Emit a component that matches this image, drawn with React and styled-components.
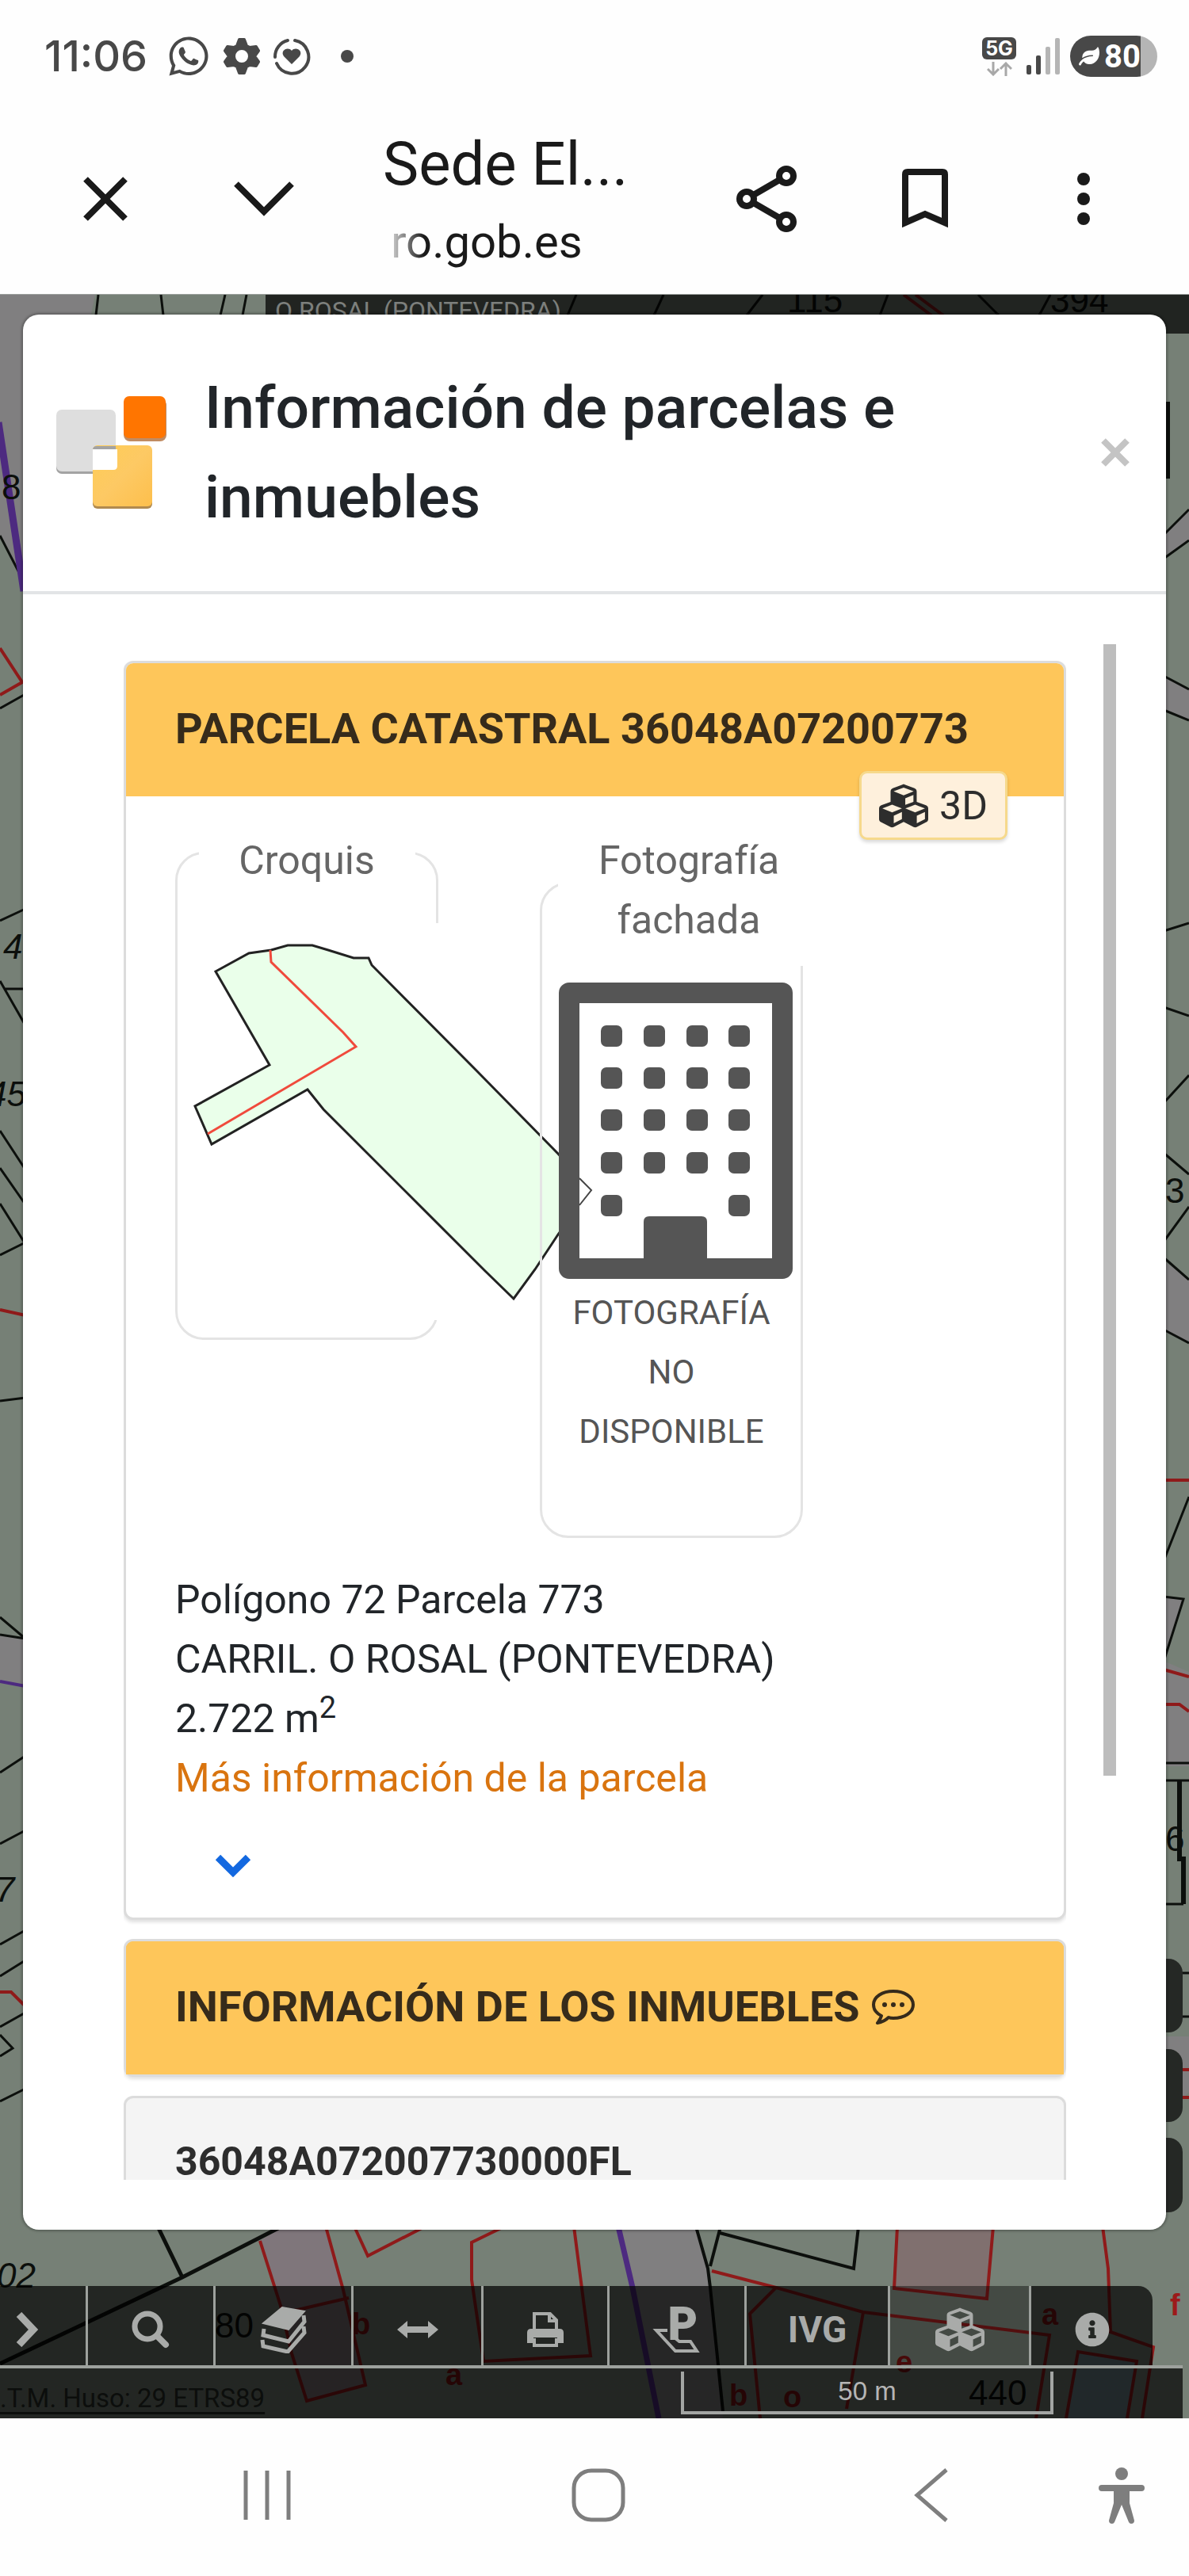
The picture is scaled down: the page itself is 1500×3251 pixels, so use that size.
import React, { useState } from 'react'
import styled, { createGlobalStyle } from 'styled-components'
import { FaWhatsapp, FaCubes, FaLeaf, FaInfoCircle } from 'react-icons/fa'


const GlobalStyle = createGlobalStyle`
  * {
    box-sizing: border-box;
  }
  body {
    margin: 0;
    background: #fefefe;
    font-family: Roboto, "Liberation Sans", sans-serif;
    color: #212529;
  }
  button {
    border: 0;
    padding: 0;
    background: none;
    color: inherit;
    font: inherit;
    cursor: pointer;
  }
  svg {
    display: block;
    flex: none;
  }
`

/* ---------- phone status bar ---------- */

const StatusBar = styled.header`
  display: flex;
  justify-content: space-between;
  align-items: center;
  height: 130px;
  padding: 12px 40px 0 56px;
  color: #484848;
`

const StatusGroup = styled.div`
  display: flex;
  align-items: center;
  gap: ${props => props.$gap}px;
`

const Clock = styled.time`
  font-family: Inter, Roboto, sans-serif;
  font-size: 54px;
  font-weight: 500;
  line-height: 60px;
  margin-right: 8px;
`

const Dot = styled.span`
  width: 16px;
  height: 16px;
  margin-left: 22px;
  border-radius: 50%;
  background: #484848;
`

const Network = styled.div`
  display: flex;
  flex-direction: column;
  align-items: center;
  gap: 3px;
`

const NetworkLabel = styled.span`
  width: 43px;
  border-radius: 6px;
  background: #484848;
  color: #fff;
  font-family: Inter, Roboto, sans-serif;
  font-size: 25px;
  font-weight: 700;
  line-height: 28px;
  text-align: center;
`

const Battery = styled.div`
  display: flex;
  align-items: center;
  justify-content: center;
  gap: 6px;
  width: 110px;
  height: 52px;
  padding-right: 10px;
  border-radius: 26px;
  background: linear-gradient(to right, #484848 81%, #b5b5b5 81%);
  color: #fff;
  font-size: 40px;
  font-weight: 700;
`

const GearIcon = () => (
  <svg width="46" height="48" viewBox="0 0 46 48">
    <path
      fill="#484848"
      stroke="#484848"
      strokeWidth="4"
      strokeLinejoin="round"
      fillRule="evenodd"
      d="M20 3h6l3 8 4 2 8-1 3 5-5 7 5 7-3 5-8-1-4 2-3 8h-6l-3-8-4-2-8 1-3-5 5-7-5-7 3-5 8 1 4-2zM23 14a10 10 0 1 0 0 20 10 10 0 0 0 0-20z"
    />
  </svg>
)

const HeartRingIcon = () => (
  <svg width="48" height="48" viewBox="0 0 48 48">
    <g fill="none" stroke="#484848" strokeWidth="4" strokeLinecap="round">
      <path d="M28 4a21 21 0 1 1-23 29" />
      <path d="M3 25a21 21 0 0 1 16-21" />
    </g>
    <path fill="#484848" d="M24 34L14 24c-5-7 5-13 10-7 5-6 15 0 10 7z" />
  </svg>
)

const DataArrows = () => (
  <svg width="32" height="18" viewBox="0 0 32 18" fill="none" stroke="#a8a8a8" strokeWidth="3">
    <path d="M8 0v16M1 9l7 7 7-7M24 18V2M17 9l7-7 7 7" />
  </svg>
)

const SignalIcon = () => (
  <svg width="42" height="46" viewBox="0 0 42 46">
    <g fill="#484848">
      <rect x="0" y="34" width="6" height="12" rx="2" />
      <rect x="12" y="22" width="6" height="24" rx="2" />
    </g>
    <g fill="#b5b5b5">
      <rect x="24" y="11" width="6" height="35" rx="2" />
      <rect x="36" y="0" width="6" height="46" rx="2" />
    </g>
  </svg>
)

/* ---------- browser bar ---------- */

const BrowserBar = styled.nav`
  display: flex;
  align-items: center;
  height: 241px;
  padding: 0 33px;
  color: #1a1a1a;
`

const BarButton = styled.button`
  display: flex;
  justify-content: center;
  width: 200px;
`

const PageTitle = styled.div`
  display: flex;
  flex-direction: column;
  flex: 1;
  gap: 16px;
  padding-left: 50px;
  min-width: 0;
`

const SiteName = styled.span`
  font-size: 76px;
  line-height: 92px;
  white-space: nowrap;
`

const SiteUrl = styled.span`
  padding-left: 10px;
  font-size: 58px;
  line-height: 72px;
  mask-image: linear-gradient(to right, transparent, #000 52px);
`

const BarIcon = ({ width, height, stroke = 8, children }) => (
  <svg width={width} height={height} viewBox={`0 0 ${width} ${height}`} fill="none" stroke="#1a1a1a" strokeWidth={stroke}>
    {children}
  </svg>
)

/* ---------- map ---------- */

const MapArea = styled.main`
  position: relative;
  overflow: hidden;
  padding-top: 25px;
  border-top: 1px solid #9a9f9c;
  background: #768076;
`

const MapDrawing = styled.svg`
  position: absolute;
  inset: 0;
  width: 100%;
  height: 100%;
`

const LocationBar = styled.div`
  position: absolute;
  top: 0;
  left: 335px;
  right: 0;
  height: 49px;
  padding-left: 12px;
  background: rgba(0, 0, 0, .72);
  color: #7c7f7c;
  font-size: 32px;
  line-height: 40px;
`

const ink = { fill: 'none', stroke: '#0c0f0c', strokeWidth: 3 }
const red = { fill: 'none', stroke: '#8f1a1a', strokeWidth: 4 }
const violet = { fill: 'none', stroke: '#4d2a80', strokeWidth: 7 }

const CadastralMap = () => (
  <MapDrawing viewBox="0 372 1500 2680" preserveAspectRatio="xMidYMid slice" aria-hidden="true">
    <g fill="#807f80">
      <path d="M0 372H120L40 760 0 676z" />
      <path d="M0 2063L60 2072V2132L0 2122z" />
      <path d="M1465 675L1500 643V682L1465 704zM1465 853L1500 870V909L1465 896zM1465 1589L1500 1615V1695L1465 1679z" />
      <path d="M1465 2015L1493 2018 1470 2097 1500 2110V2229H1465zM1465 2570H1500V2640L1465 2680z" />
      <path d="M781 2805H876L893 2863 896 2887 912 3052H831L798 2887z" />
    </g>
    <path fill="#7f767b" d="M356 2810H411L433 2890 461 3010 387 3030 354 2910 328 2828z" />
    <path fill="#80706f" d="M1132 2810L1128 2888 1245 2901 1253 2810z" />
    <path fill="#6f868c" d="M1345 3052L1360 2968 1434 2980 1422 3052z" />

    <g {...ink}>
      <path d="M124 372L121 398M203 372L206 398M284 372L278 398M311 372L306 398" />
      <path d="M727 372L716 398M837 372L825 398M962 372L942 398M1120 372L1110 398M1234 372L1260 398M1325 372L1311 398" />
      <path d="M0 676L32 738M0 894L32 876M0 1162L32 1147M0 1238L32 1294M5 1248H32" />
      <path d="M0 1427L32 1476M0 1474L32 1520M0 1519L32 1570M0 1584L32 1568M0 1768L32 1764" />
      <path d="M0 2041L32 2068M0 2063L32 2068M0 2237L32 2216M0 2327L32 2310M0 2454L32 2436M0 2494L32 2474" />
      <path d="M0 2558L32 2540M0 2568L16 2585 0 2595M0 2652L32 2636" />
      <path d="M1468 675L1500 643M1468 705L1500 682M1468 853L1500 870M1468 896L1500 909M1468 1175L1500 1165M1468 1271L1500 1282" />
      <path d="M1468 1392L1500 1357M1468 1455L1500 1482M1468 1567L1500 1523M1468 1587L1500 1615M1468 1678L1500 1695" />
      <path d="M1468 1970L1500 1889M1468 2015L1493 2018 1468 2097M1468 2225H1500M1468 2247H1500" />
      <path strokeWidth="6" d="M1488 2247V2346H1493V2403" />
      <path d="M1468 2403H1493M1468 2490H1500M1468 2545H1500" />
      <path strokeWidth="5" d="M199 2810L230 2874M355 2810L230 2874 0 2983" />
      <path strokeWidth="4" d="M878 2810L893 2863 896 2887 912 3043M909 2810L896 2860M908 2818L1077 2863 1083 2810" />
    </g>
    <path fill="#0c0f0c" d="M1470 507h6v97h-6z" />

    <g {...red}>
      <path d="M1140 372L1175 398M1155 372L1190 398" />
      <path d="M0 818L28 861 0 877M0 1653L32 1660M0 2514H14L32 2532" />
      <path d="M1468 1868H1500M1468 2107L1500 2116M1468 2151H1488L1500 2160M1468 2612H1500M1468 2647H1500" />
      <path d="M328 2828L354 2910 368 2970 387 3030 461 3010 433 2890 411 2810M354 2920L440 2900" />
      <path d="M447 2810L464 2847 536 2810M636 2810L595 2830V2877L610 2980 745 2973 724 2810" />
      <path d="M898 2866L979 2887 1089 2918 1324 2947 1307 3052M979 2887L946 2920 959 3052M1089 2918L1068 3040" />
      <path d="M1132 2810L1128 2888 1245 2901 1253 2810" />
      <path d="M1391 2810L1398 2863 1401 2943 1455 2962 1441 3052M1345 3052L1360 2968 1434 2980 1422 3052" />
    </g>

    <path {...violet} strokeWidth="9" d="M-2 533L30 746" />
    <path {...violet} strokeWidth="4" d="M0 2122L32 2128" />
    <path {...violet} d="M780 2810L798 2887 831 3052" />

    <g fill="#0c0f0c" fontFamily="Liberation Sans, sans-serif" fontSize="44">
      <text x="2" y="630">8</text>
      <text x="4" y="1210" fontStyle="italic">4</text>
      <text x="-16" y="1396" fontStyle="italic">45</text>
      <text x="-6" y="2400" fontStyle="italic">7</text>
      <text x="1470" y="1518">3</text>
      <text x="1470" y="2336">6</text>
      <text x="-4" y="2887" fontStyle="italic">02</text>
      <text x="271" y="2950">80</text>
      <text x="993" y="394">115</text>
      <text x="1325" y="394">394</text>
      <text x="1222" y="3035">440</text>
    </g>
    <g fill="#7c1212" fontFamily="Liberation Sans, sans-serif" fontSize="38" fontWeight="bold">
      <text x="444" y="2946">b</text>
      <text x="562" y="3010">a</text>
      <text x="920" y="3036">b</text>
      <text x="988" y="3038">o</text>
      <text x="1130" y="2994">e</text>
      <text x="1314" y="2934">a</text>
      <text x="1476" y="2922" fill="#9c1a1a">f</text>
    </g>
    <g fill="#252825">
      <rect x="1440" y="2472" width="52" height="93" rx="18" />
      <rect x="1440" y="2586" width="52" height="92" rx="18" />
      <rect x="1440" y="2698" width="52" height="94" rx="18" />
    </g>
  </MapDrawing>
)

/* ---------- modal ---------- */

const Modal = styled.section`
  position: relative;
  margin: 0 29px;
  border-radius: 20px;
  background: #fff;
  box-shadow: 0 0 3px 2px rgba(0, 0, 0, .25);
`

const ModalHeader = styled.header`
  display: flex;
  align-items: center;
  gap: 48px;
  padding: 61px 45px 62px 41px;
  border-bottom: 4px solid #e2e4e6;
`

const ModalTitle = styled.h1`
  flex: 1;
  margin: 0;
  font-size: 75px;
  font-weight: 500;
  line-height: 113px;
`

const ModalBody = styled.div`
  display: flex;
  gap: 47px;
  padding: 63px 63px 63px 127px;
`

const CardList = styled.div`
  display: flex;
  flex: 1;
  flex-direction: column;
  gap: 24px;
  max-height: 1938px;
  padding-top: 21px;
  overflow: hidden;
`

const ScrollTrack = styled.div`
  width: 16px;
`

const ScrollThumb = styled.div`
  background: #bdbdbd;
`

const Card = styled.article`
  position: relative;
  flex: none;
  border: 3px solid #dcdcdc;
  border-radius: 12px;
  background: ${props => props.$background || '#fff'};
  box-shadow: 0 3px 4px rgba(0, 0, 0, .12);
`

const CardHeader = styled.h2`
  display: flex;
  align-items: center;
  gap: 14px;
  margin: 0;
  padding: 45px 62px 48px;
  border-radius: 9px 9px 0 0;
  background: #fec65a;
  color: #362b1b;
  font-size: 54px;
  font-weight: 700;
  line-height: 75px;
`

const PropertyHeader = styled(CardHeader)`
  padding-top: 43px;
  background: none;
  color: #2d2d2d;
  font-size: 50px;
`

const CardContent = styled.div`
  padding: 24px 62px 28px;
  font-size: 50px;
  line-height: 75px;
`

const View3dButton = styled.button`
  position: absolute;
  top: 136px;
  right: 71px;
  display: flex;
  align-items: center;
  gap: 14px;
  height: 87px;
  padding: 0 22px;
  border: 3px solid #f6d98c;
  border-radius: 10px;
  background: #fef0dc;
  box-shadow: 0 3px 4px rgba(0, 0, 0, .15);
  color: #2d2d2d;
  font-size: 50px;
`

const Pictures = styled.div`
  display: flex;
  align-items: flex-start;
  gap: 128px;
  margin-bottom: 41px;
`

const Frame = styled.fieldset`
  width: 332px;
  min-width: 0;
  margin: 0;
  padding: 0 0 ${props => props.$bottom}px;
  border: 3px solid #e4e4e4;
  border-radius: 36px;
`

const FrameLabel = styled.legend`
  width: ${props => props.$width}px;
  margin-left: ${props => props.$indent}px;
  padding: 20px 30px 0;
  background: #fff;
  box-shadow: 0 20px 0 #fff;
  color: #666;
  text-align: center;
`

const ParcelSketch = styled.svg`
  margin: 41px 0 0 20px;
  background: #fff;
`

const NoPhoto = styled.figure`
  position: relative;
  margin: 41px 0 0;
  color: #555;
  text-align: center;
  svg {
    margin-left: 21px;
  }
`

const NoPhotoText = styled.figcaption`
  padding: 5px 36px 0;
  font-size: 42px;
`

const Details = styled.address`
  font-style: normal;
  sup {
    font-size: 38px;
    line-height: 0;
  }
`

const MoreLink = styled.a`
  color: #d9740f;
  text-decoration: none;
`

const ExpandButton = styled.button`
  display: flex;
  align-items: center;
  height: 75px;
  margin-top: 35px;
  padding: 0 50px;
`

const CatastroLogo = () => (
  <svg width="140" height="146" viewBox="0 0 140 146">
    <defs>
      <linearGradient id="gold" x1="0" y1="0" x2="1" y2="1">
        <stop offset="0" stopColor="#ffcd55" />
        <stop offset=".5" stopColor="#fdc964" />
        <stop offset="1" stopColor="#fdbf4c" />
      </linearGradient>
    </defs>
    <rect x="1" y="22" width="75" height="78" rx="7" fill="#a3a3a3" />
    <rect x="1" y="19" width="75" height="78" rx="7" fill="#dedede" />
    <rect x="86" y="5" width="54" height="54" rx="8" fill="#c08b62" />
    <rect x="86" y="2" width="53" height="53" rx="7" fill="#ff7500" />
    <rect x="47" y="68" width="75" height="76" rx="6" fill="#b18a4f" />
    <rect x="47" y="64" width="75" height="77" rx="6" fill="url(#gold)" />
    <path d="M47 70q0-5 5-5h24v4H47z" fill="#a3a3a3" />
    <path d="M47 69h31v21q0 5-5 5H47z" fill="#fff" />
  </svg>
)

const parcelOutline = '28,61 70,38 98,34 119,28 150,28 170,34 202,44 221,44 225,53 357,186 460,291 500,336 460,393 431,437 404,474 368,439 164,235 144,210 23,279 2,231 96,179'

const Sketch = () => (
  <ParcelSketch width="501" height="501" viewBox="0 0 501 501" role="img" aria-label="Croquis de la parcela">
    <polygon points={parcelOutline} fill="#eaffea" stroke="#222" strokeWidth="3" />
    <polyline points="97,34 98,49 189,138 205,156 18,266" fill="none" stroke="#f04a3c" strokeWidth="3" />
  </ParcelSketch>
)

const BuildingIcon = () => {
  const columns = [53, 107, 161, 214]
  const rows = [54, 107, 160, 214, 268]
  return (
    <svg width="295" height="374" viewBox="0 0 295 374">
      <rect x="13" y="13" width="269" height="348" fill="#fff" stroke="#555" strokeWidth="26" strokeLinejoin="round" />
      <path d="M26 247l15 15-15 19" fill="none" stroke="#444" strokeWidth="2" />
      {rows.map((y, row) => columns.map((x, col) => (
        row === 4 && (col === 1 || col === 2)
          ? null
          : <rect key={`${x}-${y}`} x={x} y={y} width="27" height="27" rx="7" fill="#555" />
      )))}
      <path d="M107 361V302q0-7 7-7h66q7 0 7 7v59z" fill="#555" />
    </svg>
  )
}

const CommentIcon = () => (
  <svg width="56" height="46" viewBox="0 0 56 46">
    <path
      fill="none"
      stroke="#362b1b"
      strokeWidth="4"
      strokeLinejoin="round"
      d="M28 3C14 3 3 10 3 20c0 6 4 11 10 14-1 4-3 6-5 9 6-1 11-4 14-7 2 1 4 1 6 1 14 0 25-7 25-17S42 3 28 3z"
    />
    <g fill="#362b1b">
      <circle cx="17" cy="20" r="3" />
      <circle cx="28" cy="20" r="3" />
      <circle cx="39" cy="20" r="3" />
    </g>
  </svg>
)

/* ---------- map toolbar ---------- */

const Toolbar = styled.div`
  position: relative;
  display: grid;
  grid-template-columns: 111fr 161fr 174fr 164fr 159fr 173fr 181fr 178fr 153fr;
  height: 104px;
  margin-top: 71px;
  padding-right: 46px;
  &::after {
    content: '';
    position: absolute;
    left: 0;
    right: 8px;
    bottom: 0;
    height: 4px;
    background: #9da19d;
  }
`

const Tool = styled.button`
  display: flex;
  align-items: center;
  justify-content: center;
  min-width: 0;
  height: 100px;
  padding-top: 10px;
  border-right: 3px solid #9da19d;
  background: rgba(0, 0, 0, ${props => props.$light ? '.42' : '.7'});
  color: #a9aba9;
  font-size: 46px;
  &:first-child {
    padding-right: 40px;
  }
  &:last-child {
    border-right: 0;
    border-top-right-radius: 18px;
  }
`

const ToolLabel = styled.span`
  font-family: "Liberation Sans Narrow", Roboto, sans-serif;
  font-size: 46px;
  font-weight: 700;
`

const FootBar = styled.footer`
  position: relative;
  display: flex;
  justify-content: space-between;
  align-items: flex-start;
  height: 63px;
  margin-right: 8px;
  padding: 4px 163px 0 0;
  background: rgba(0, 0, 0, .7);
`

const Projection = styled.a`
  margin-top: 16px;
  color: #0c0e0c;
  font-size: 33px;
  line-height: 36px;
  text-decoration: underline;
  text-underline-offset: 6px;
`

const Scale = styled.div`
  width: 470px;
  height: 54px;
  border: solid #a3a5a3;
  border-width: 0 4px 4px;
  color: #b5b5b5;
  font-family: "Liberation Sans", sans-serif;
  font-size: 33px;
  line-height: 50px;
  text-align: center;
`

const ToolIcon = ({ width = 50, height = 46, children }) => (
  <svg width={width} height={height} viewBox={`0 0 ${width} ${height}`} fill="none" stroke="#a9aba9" strokeWidth="5">
    {children}
  </svg>
)

const tools = [
  {
    name: 'Desplegar',
    icon: <ToolIcon width={32} height={44}><path strokeWidth="9" d="M6 3l18 19L6 41" /></ToolIcon>
  },
  {
    name: 'Buscar',
    icon: <ToolIcon width={48} height={48}><circle cx="20" cy="20" r="16" strokeWidth="7" /><path strokeWidth="8" strokeLinecap="round" d="M32 32l11 11" /></ToolIcon>
  },
  {
    name: 'Capas',
    icon: (
      <ToolIcon width={60} height={60}>
        <path fill="#a9aba9" strokeWidth="2" d="M4 22L28 2l28 5-20 23z" />
        <path strokeWidth="5" d="M5 29l-1 8 32 8 20-25-1-8M3 43l1 8 31 7 21-24-1-8" />
      </ToolIcon>
    )
  },
  {
    name: 'Medir',
    icon: <ToolIcon width={52} height={24}><path fill="#a9aba9" stroke="none" d="M0 12L13 1v7h26V1l13 11-13 11v-7H13v7z" /></ToolIcon>
  },
  {
    name: 'Imprimir',
    icon: (
      <ToolIcon width={48} height={46}>
        <path strokeWidth="4" d="M10 24V3h20l8 8v13M29 3v9h9" />
        <path fill="#a9aba9" stroke="none" d="M1 40V27q0-5 5-5h36q5 0 5 5v13h-8V33H9v7z" />
        <path strokeWidth="4" d="M10 34v9h28v-9" />
      </ToolIcon>
    )
  },
  {
    name: 'Parcela',
    icon: (
      <svg width="62" height="62" viewBox="0 0 62 62">
        <path d="M19 32H5l24 26h27l-8-12H34L24 38" fill="none" stroke="#a9aba9" strokeWidth="4" />
        <text x="20" y="43" fill="#a9aba9" stroke="#a9aba9" strokeWidth="2" fontSize="56" fontWeight="700" fontFamily="Roboto, sans-serif">P</text>
      </svg>
    )
  },
  { name: 'IVG', icon: <ToolLabel>IVG</ToolLabel> },
  { name: 'Edificios 3D', light: true, icon: <FaCubes size={62} /> },
  { name: 'Ayuda', icon: <FaInfoCircle size={44} /> }
]

/* ---------- android navigation ---------- */

const SystemNav = styled.nav`
  display: grid;
  grid-template-columns: 418fr 418fr 422fr 58fr;
  align-items: center;
  height: 199px;
  padding: 0 56px 6px 128px;
`

const NavButton = styled.button`
  display: flex;
  justify-content: center;
`

const NavIcon = ({ width, height, children }) => (
  <svg width={width} height={height} viewBox={`0 0 ${width} ${height}`} fill="none" stroke="#7e7e7e" strokeWidth="5">
    {children}
  </svg>
)

const viewportHeight = 1938
const thumbHeight = 1428

const App = () => {
  const [expanded, setExpanded] = useState(false)

  return (
    <>
      <GlobalStyle />
      <StatusBar>
        <StatusGroup $gap={16}>
          <Clock>11:06</Clock>
          <FaWhatsapp size={56} />
          <GearIcon />
          <HeartRingIcon />
          <Dot />
        </StatusGroup>
        <StatusGroup $gap={13}>
          <Network>
            <NetworkLabel>5G</NetworkLabel>
            <DataArrows />
          </Network>
          <SignalIcon />
          <Battery><FaLeaf size={26} />80</Battery>
        </StatusGroup>
      </StatusBar>

      <BrowserBar>
        <BarButton aria-label="Cerrar">
          <BarIcon width={60} height={60}><path d="M5 5l50 50M55 5L5 55" /></BarIcon>
        </BarButton>
        <BarButton aria-label="Minimizar">
          <BarIcon width={78} height={46}><path d="M4 4l35 35L74 4" /></BarIcon>
        </BarButton>
        <PageTitle>
          <SiteName>Sede El...</SiteName>
          <SiteUrl>ro.gob.es</SiteUrl>
        </PageTitle>
        <BarButton aria-label="Compartir">
          <BarIcon width={78} height={86}>
            <path d="M14 43L64 14M14 43l50 29" />
            <g fill="#fff">
              <circle cx="14" cy="43" r="9" />
              <circle cx="64" cy="14" r="9" />
              <circle cx="64" cy="72" r="9" />
            </g>
          </BarIcon>
        </BarButton>
        <BarButton aria-label="Guardar">
          <BarIcon width={60} height={76}><path d="M5 68V7q0-3 3-3h44q3 0 3 3v61L30 57z" /></BarIcon>
        </BarButton>
        <BarButton aria-label="Más opciones">
          <BarIcon width={18} height={70} stroke={0}>
            <g fill="#1a1a1a">
              <circle cx="9" cy="10" r="8" />
              <circle cx="9" cy="35" r="8" />
              <circle cx="9" cy="60" r="8" />
            </g>
          </BarIcon>
        </BarButton>
      </BrowserBar>

      <MapArea>
        <CadastralMap />
        <LocationBar>O ROSAL (PONTEVEDRA)</LocationBar>

        <Modal>
          <ModalHeader>
            <CatastroLogo />
            <ModalTitle>Información de parcelas e inmuebles</ModalTitle>
            <button aria-label="Cerrar información">
              <svg width="38" height="38" viewBox="0 0 38 38" stroke="#c4c4c4" strokeWidth="8">
                <path d="M4 4l30 30M34 4L4 34" />
              </svg>
            </button>
          </ModalHeader>

          <ModalBody>
            <CardList>
              <Card>
                <CardHeader>PARCELA CATASTRAL 36048A07200773</CardHeader>
                <View3dButton><FaCubes size={62} />3D</View3dButton>
                <CardContent>
                  <Pictures>
                    <Frame $bottom={22}>
                      <FrameLabel $width={273} $indent={0}>Croquis</FrameLabel>
                      <Sketch />
                    </Frame>
                    <Frame $bottom={94}>
                      <FrameLabel $width={330} $indent={20}>Fotografía fachada</FrameLabel>
                      <NoPhoto>
                        <BuildingIcon />
                        <NoPhotoText>FOTOGRAFÍA NO DISPONIBLE</NoPhotoText>
                      </NoPhoto>
                    </Frame>
                  </Pictures>
                  <Details>
                    <div>Polígono 72 Parcela 773</div>
                    <div>CARRIL. O ROSAL (PONTEVEDRA)</div>
                    <div>2.722 m<sup>2</sup></div>
                    <MoreLink href="#parcela">Más información de la parcela</MoreLink>
                  </Details>
                  <ExpandButton aria-label="Ver más" aria-expanded={expanded} onClick={() => setExpanded(!expanded)}>
                    <svg width="46" height="32" viewBox="0 0 46 32" fill="none" stroke="#1368e0" strokeWidth="9">
                      <path d="M4 5l19 19L42 5" />
                    </svg>
                  </ExpandButton>
                </CardContent>
              </Card>

              <Card $background="#fec65a">
                <CardHeader>INFORMACIÓN DE LOS INMUEBLES <CommentIcon /></CardHeader>
              </Card>

              <Card $background="#f4f4f4">
                <PropertyHeader>36048A072007730000FL</PropertyHeader>
              </Card>
            </CardList>
            <ScrollTrack>
              <ScrollThumb style={{ height: `${thumbHeight / viewportHeight * 100}%` }} />
            </ScrollTrack>
          </ModalBody>
        </Modal>

        <Toolbar>
          {tools.map(tool => (
            <Tool key={tool.name} $light={tool.light} aria-label={tool.name}>
              {tool.icon}
            </Tool>
          ))}
        </Toolbar>
        <FootBar>
          <Projection href="#coordenadas">.T.M. Huso: 29 ETRS89</Projection>
          <Scale>50 m</Scale>
        </FootBar>
      </MapArea>

      <SystemNav>
        <NavButton aria-label="Recientes">
          <NavIcon width={60} height={62}><path d="M3 0v62M30 0v62M57 0v62" /></NavIcon>
        </NavButton>
        <NavButton aria-label="Inicio">
          <NavIcon width={68} height={68}><rect x="3" y="3" width="62" height="62" rx="22" /></NavIcon>
        </NavButton>
        <NavButton aria-label="Atrás">
          <NavIcon width={44} height={68}><path d="M41 2L4 34l37 32" /></NavIcon>
        </NavButton>
        <NavButton aria-label="Accesibilidad">
          <svg width="58" height="72" viewBox="0 0 58 72" fill="#7e7e7e">
            <circle cx="29" cy="9" r="8" />
            <path d="M4 23h50q4 0 4 4t-4 4H39v15l6 22q0 4-4 4-2 0-3-2l-9-22-9 22q-1 2-3 2-4 0-4-4l6-22V31H4q-4 0-4-4t4-4z" />
          </svg>
        </NavButton>
      </SystemNav>
    </>
  )
}

export default App
